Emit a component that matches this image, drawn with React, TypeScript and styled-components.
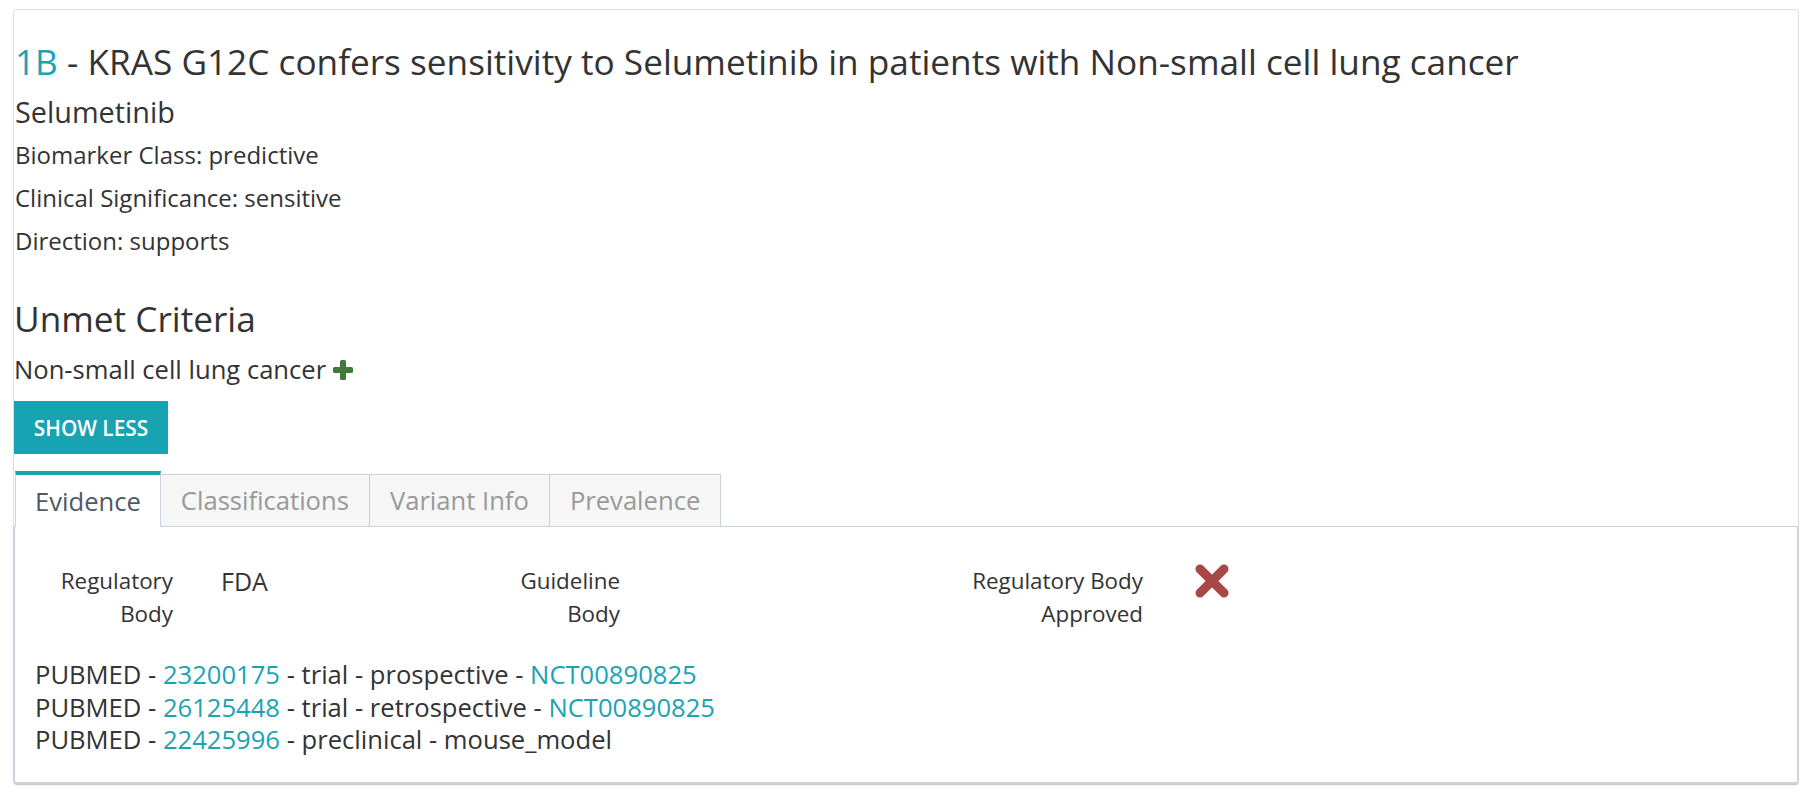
import React, { FC } from 'react';
import styled, { createGlobalStyle } from 'styled-components';

const GlobalStyle = createGlobalStyle`
	body {
		margin: 0;
		background: #fff;
		font-family: 'Open Sans', 'Noto Sans', sans-serif;
		color: #333;
	}
`;

const Page = styled.div`
	padding: 9px 13px 10px 13px;
`;

const Card = styled.div`
	border: 1px solid #ddd;
	border-radius: 4px;
	padding-top: 32px;
	background: #fff;
`;

const Title = styled.h1`
	margin: 0 0 0 1px;
	font-size: 35.2px;
	line-height: 38px;
	font-weight: 400;
	color: #333;
`;

const Level = styled.span`
	color: #1ba3b3;
`;

const DrugName = styled.div`
	margin: 14px 0 4px 1px;
	font-size: 28.8px;
	line-height: 36px;
`;

const InfoLine = styled.div`
	margin-left: 1px;
	font-size: 24px;
	line-height: 42.75px;
`;

const SectionTitle = styled.h2`
	margin: 36px 0 0 0;
	font-size: 35.2px;
	line-height: 40px;
	font-weight: 400;
`;

const Criterion = styled.div`
	margin: 12px 0 0 0;
	font-size: 25.6px;
	line-height: 40px;
	display: flex;
	align-items: center;
	gap: 7px;
`;

const ShowButton = styled.button`
	display: block;
	margin-top: 11px;
	height: 53px;
	width: 154px;
	border: none;
	background: #18a3b2;
	color: #fff;
	font-family: 'Open Sans', sans-serif;
	font-size: 20.8px;
	font-weight: 600;
	text-transform: uppercase;
	cursor: pointer;
`;

const TabBar = styled.div`
	margin-top: 17px;
	display: flex;
	align-items: flex-end;
`;

const Tab = styled.div<{ $active?: boolean }>`
	height: ${(p) => (p.$active ? '52px' : '51px')};
	padding: 0 ${(p) => (p.$active ? '19px' : '20px')};
	display: flex;
	align-items: center;
	font-size: 25.6px;
	color: ${(p) => (p.$active ? '#4f5966' : '#999')};
	background: ${(p) => (p.$active ? '#fff' : '#f6f6f6')};
	border: 1px solid #c9d3dd;
	border-top: ${(p) => (p.$active ? '4px solid #18a3b2' : '1px solid #c9d3dd')};
	border-bottom: none;
	margin-left: ${(p) => (p.$active ? '1px' : '-1px')};
	position: relative;
	z-index: ${(p) => (p.$active ? 1 : 0)};
	margin-bottom: ${(p) => (p.$active ? '-1px' : '0')};
`;

const Panel = styled.div`
	border: 1px solid #c9d3dd;
	border-bottom-width: 2px;
	box-shadow: 0 1px 2px rgba(0, 0, 0, 0.12);
	padding: 38px 20px 25px 20px;
	font-size: 25.6px;
	line-height: 32.5px;
`;

const FieldGrid = styled.div`
	display: grid;
	grid-template-columns: 138px 241px 110px 227px 200px 60px;
	column-gap: 48px;
	align-items: start;
`;

const FieldLabel = styled.div`
	text-align: right;
	font-size: 22.4px;
`;

const FieldValue = styled.div`
	font-size: 25px;
`;

const References = styled.div`
	margin-top: 29px;
`;

const RefLine = styled.div`
	line-height: 32.5px;
`;

const RefLink = styled.a`
	color: #1ba3b3;
	text-decoration: none;
`;

const PlusIcon: FC = () => (
	<svg width="20" height="20" viewBox="0 0 20 20">
		<rect x="7" y="0" width="6" height="20" rx="1.5" fill="#3f7a3c" />
		<rect x="0" y="7" width="20" height="6" rx="1.5" fill="#3f7a3c" />
	</svg>
);

const CrossIcon: FC = () => (
	<svg width="36" height="36" viewBox="0 0 36 36" style={{ marginLeft: 3, marginTop: -2 }}>
		<g stroke="#a84846" strokeWidth="9" strokeLinecap="round">
			<line x1="6" y1="6" x2="30" y2="30" />
			<line x1="30" y1="6" x2="6" y2="30" />
		</g>
	</svg>
);

interface Reference {
	pmid: string;
	kind: string;
	nct?: string;
}

const references: Reference[] = [
	{ pmid: '23200175', kind: 'trial - prospective', nct: 'NCT00890825' },
	{ pmid: '26125448', kind: 'trial - retrospective', nct: 'NCT00890825' },
	{ pmid: '22425996', kind: 'preclinical - mouse_model' },
];

const App: FC = () => {
	return (
		<Page>
			<GlobalStyle />
			<Card>
				<Title>
					<Level>1B</Level> - KRAS G12C confers sensitivity to Selumetinib in patients with Non-small cell lung cancer
				</Title>
				<DrugName>Selumetinib</DrugName>
				<InfoLine>Biomarker Class: predictive</InfoLine>
				<InfoLine>Clinical Significance: sensitive</InfoLine>
				<InfoLine>Direction: supports</InfoLine>
				<SectionTitle>Unmet Criteria</SectionTitle>
				<Criterion>
					Non-small cell lung cancer <PlusIcon />
				</Criterion>
				<ShowButton>Show less</ShowButton>
				<TabBar>
					<Tab $active>Evidence</Tab>
					<Tab>Classifications</Tab>
					<Tab>Variant Info</Tab>
					<Tab>Prevalence</Tab>
				</TabBar>
				<Panel>
					<FieldGrid>
						<FieldLabel>Regulatory Body</FieldLabel>
						<FieldValue>FDA</FieldValue>
						<FieldLabel>Guideline Body</FieldLabel>
						<FieldValue />
						<FieldLabel>Regulatory Body Approved</FieldLabel>
						<FieldValue>
							<CrossIcon />
						</FieldValue>
					</FieldGrid>
					<References>
						{references.map((r) => (
							<RefLine key={r.pmid}>
								PUBMED - <RefLink href="#">{r.pmid}</RefLink> - {r.kind}
								{r.nct && (
									<>
										{' '}
										- <RefLink href="#">{r.nct}</RefLink>
									</>
								)}
							</RefLine>
						))}
					</References>
				</Panel>
			</Card>
		</Page>
	);
};

export default App;
